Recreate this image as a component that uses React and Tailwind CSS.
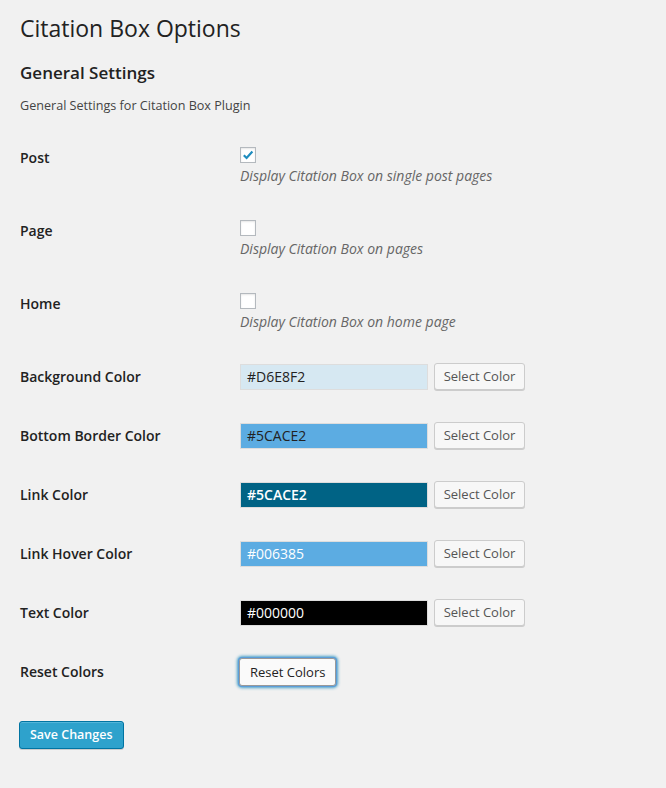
import React, { useState } from 'react';

const font = { fontFamily: '"Open Sans", "Noto Sans", sans-serif' };

const CheckRow = ({ label, desc, checked, onToggle }) => (
  <div className="flex h-[73px]">
    <div className="w-[220px] pt-[17px] text-[14px] leading-[18px] font-semibold text-[#222]">{label}</div>
    <div className="pt-[15px]">
      <button
        type="button"
        onClick={onToggle}
        className="w-4 h-4 bg-white border border-[#b4b9be] shadow-[inset_0_1px_2px_rgba(0,0,0,0.1)] flex items-center justify-center"
      >
        {checked && (
          <svg width="12" height="12" viewBox="0 0 12 12">
            <path d="M1.8 6.2 L4.6 9 L10.4 2.6" fill="none" stroke="#1e8cbe" strokeWidth="2.2" strokeLinejoin="miter" />
          </svg>
        )}
      </button>
      <p className="mt-[3px] text-[14px] leading-[20px] italic text-[#666]">{desc}</p>
    </div>
  </div>
);

const ColorRow = ({ label, value, bg, text, bold }) => (
  <div className="flex h-[59px]">
    <div className="w-[220px] pt-[17px] text-[14px] leading-[18px] font-semibold text-[#222]">{label}</div>
    <div className="pt-[13px] flex items-start">
      <div
        className={`w-[188px] h-[26px] border border-[#ddd] px-[6px] text-[14px] leading-[24px] ${bg} ${text} ${bold ? 'font-semibold' : ''}`}
      >
        {value}
      </div>
      <button
        type="button"
        className="ml-[6px] -mt-px w-[91px] h-[27px] bg-[#f7f7f7] border border-[#ccc] rounded-[3px] shadow-[0_1px_0_#ccc] text-[13px] text-[#555] leading-[25px]"
      >
        Select Color
      </button>
    </div>
  </div>
);

export default function App() {
  const [post, setPost] = useState(true);
  const [page, setPage] = useState(false);
  const [home, setHome] = useState(false);

  return (
    <div className="min-h-[788px] bg-[#f1f1f1] px-5 text-[#444]" style={font}>
      <h1 className="pt-[11px] text-[23px] leading-[34px] font-normal text-[#222]">Citation Box Options</h1>
      <h2 className="mt-[16px] text-[17px] leading-[24px] font-semibold text-[#222]">General Settings</h2>
      <p className="mt-[11px] text-[12.6px] leading-[20px] text-[#444]">General Settings for Citation Box Plugin</p>

      <div className="mt-[16px]">
        <CheckRow label="Post" desc="Display Citation Box on single post pages" checked={post} onToggle={() => setPost(!post)} />
        <CheckRow label="Page" desc="Display Citation Box on pages" checked={page} onToggle={() => setPage(!page)} />
        <CheckRow label="Home" desc="Display Citation Box on home page" checked={home} onToggle={() => setHome(!home)} />

        <ColorRow label="Background Color" value="#D6E8F2" bg="bg-[#d6e8f2]" text="text-[#222]" />
        <ColorRow label="Bottom Border Color" value="#5CACE2" bg="bg-[#5cace2]" text="text-[#222]" />
        <ColorRow label="Link Color" value="#5CACE2" bg="bg-[#006385]" text="text-white" bold />
        <ColorRow label="Link Hover Color" value="#006385" bg="bg-[#5cace2]" text="text-white" />
        <ColorRow label="Text Color" value="#000000" bg="bg-black" text="text-white" />

        <div className="flex h-[59px]">
          <div className="w-[220px] pt-[17px] text-[14px] leading-[18px] font-semibold text-[#222]">Reset Colors</div>
          <div className="pt-[12px]">
            <button
              type="button"
              className="-ml-px h-[28px] px-[10px] bg-[#fafafa] border border-[#999] rounded-[3px] text-[13px] text-[#222] leading-[26px] shadow-[0_0_0_1px_#5b9dd9,0_0_3px_2px_rgba(30,140,190,0.8)]"
            >
              Reset Colors
            </button>
          </div>
        </div>
      </div>

      <button
        type="button"
        className="mt-[16px] -ml-px h-[28px] px-[10px] bg-[#2ea2cc] border border-[#0074a2] rounded-[3px] text-[12.5px] font-semibold text-white leading-[26px] shadow-[inset_0_1px_0_rgba(120,200,230,0.5),0_1px_0_rgba(0,0,0,0.15)]"
      >
        Save Changes
      </button>
    </div>
  );
}
